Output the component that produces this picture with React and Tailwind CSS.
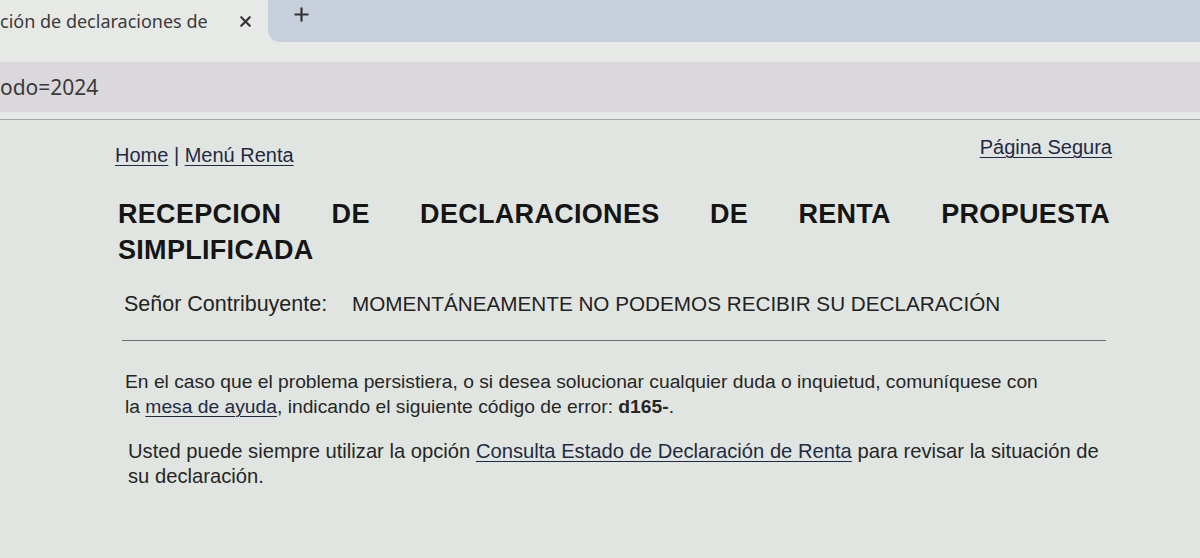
import React from 'react';
import { X, Plus } from 'lucide-react';

const link = 'underline underline-offset-[3px] decoration-1 text-[#1f2a44]';

const App = () => {
  const titleWords = ['RECEPCION', 'DE', 'DECLARACIONES', 'DE', 'RENTA', 'PROPUESTA'];

  return (
    <div className="w-[1200px] h-[558px] overflow-hidden bg-[#e1e5e1] font-['Liberation_Sans',Arial,sans-serif]">
      {/* BROWSER CHROME */}
      <div className="bg-[#e7e9e6]">
        <div className="flex h-[42px]">
          <div className="w-[268px] flex items-center justify-between pr-[14px] font-['Noto_Sans',sans-serif]">
            <span className="text-[18px] text-[#3a3a3a] whitespace-nowrap">ción de declaraciones de</span>
            <X size={17} strokeWidth={3} className="text-[#333]" />
          </div>
          <div className="flex-1 bg-[#c6cfdb] rounded-bl-[12px] flex items-start pl-[23px] pt-[4px]">
            <Plus size={21} strokeWidth={2.5} className="text-[#333]" />
          </div>
        </div>
        <div className="h-[78px] pt-[20px] border-b border-[#a5a8a6]">
          <div className="h-[50px] bg-[#dbd8db] flex items-center pt-[2px] font-['Noto_Sans',sans-serif]">
            <span className="text-[21px] text-[#3a3a3a]">odo=2024</span>
          </div>
        </div>
      </div>

      {/* PAGE */}
      <main className="ml-[115px] w-[997px]">
        <div className="flex justify-between items-start pt-[16px] text-[20px] leading-[23px]">
          <div className="mt-[8px] text-[#1f2a44]">
            <a className={link}>Home</a> | <a className={link}>Menú Renta</a>
          </div>
          <a className={link}>Página Segura</a>
        </div>

        <h1 className="mt-[29px] ml-[3px] w-[992px] text-[27px] tracking-[0.3px] leading-[36px] font-bold text-[#151515]">
          <div className="flex justify-between">
            {titleWords.map((w, i) => (
              <span key={i}>{w}</span>
            ))}
          </div>
          <div>SIMPLIFICADA</div>
        </h1>

        <div className="mt-[22px] ml-[9px] flex items-center leading-[28px] text-[#222]">
          <span className="w-[228px] text-[21.5px]">Señor Contribuyente:</span>
          <span className="text-[20.7px]">MOMENTÁNEAMENTE NO PODEMOS RECIBIR SU DECLARACIÓN</span>
        </div>

        <hr className="mt-[22px] ml-[7px] w-[984px] border-0 border-t-[1.5px] border-[#707070]" />

        <div className="ml-[10px] w-[985px] leading-[25px] text-[#262626]">
          <p className="mt-[28px] text-[19.25px] whitespace-nowrap">
            En el caso que el problema persistiera, o si desea solucionar cualquier duda o inquietud, comuníquese con
            <br />
            la <a className={link}>mesa de ayuda</a>, indicando el siguiente código de error: <b>d165-</b>.
          </p>
          <p className="mt-[20px] ml-[3px] text-[20.2px] whitespace-nowrap">
            Usted puede siempre utilizar la opción <a className={link}>Consulta Estado de Declaración de Renta</a> para revisar la situación de
            <br />
            su declaración.
          </p>
        </div>
      </main>
    </div>
  );
};

export default App;
